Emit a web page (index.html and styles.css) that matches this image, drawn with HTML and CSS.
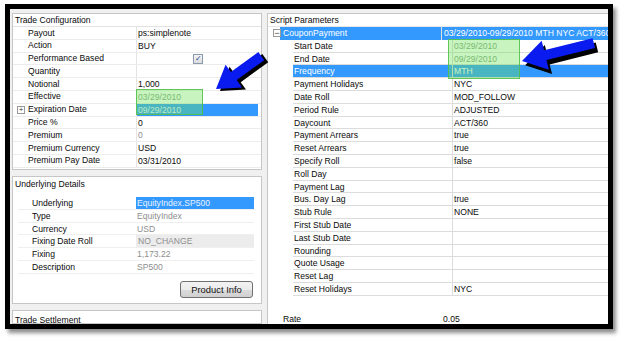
FILE: index.html
```html
<!DOCTYPE html>
<html>
<head>
<meta charset="utf-8">
<link rel="stylesheet" href="styles.css">
</head>
<body>
<div class="frame">
  <div class="left-col">
    <section class="box trade-config">
      <div class="box-header lined">Trade Configuration</div>
      <div class="prop-list">
        <div class="prop"><div class="lbl">Payout</div><div class="val">ps:simplenote</div></div>
        <div class="prop"><div class="lbl">Action</div><div class="val">BUY</div></div>
        <div class="prop"><div class="lbl">Performance Based</div><div class="val"><span class="check">&#10003;</span></div></div>
        <div class="prop"><div class="lbl">Quantity</div><div class="val"></div></div>
        <div class="prop"><div class="lbl">Notional</div><div class="val">1,000</div></div>
        <div class="prop"><div class="lbl">Effective</div><div class="val muted-green">03/29/2010</div></div>
        <div class="prop"><div class="lbl has-exp"><span class="exp">+</span>Expiration Date</div><div class="val selected">09/29/2010</div></div>
        <div class="prop"><div class="lbl">Price %</div><div class="val">0</div></div>
        <div class="prop"><div class="lbl">Premium</div><div class="val grey">0</div></div>
        <div class="prop"><div class="lbl">Premium Currency</div><div class="val">USD</div></div>
        <div class="prop"><div class="lbl">Premium Pay Date</div><div class="val">03/31/2010</div></div>
      </div>
    </section>

    <section class="box underlying">
      <div class="box-header">Underlying Details</div>
      <div class="u-list">
        <div class="urow"><div class="ulbl">Underlying</div><div class="uval selected">EquityIndex.SP500</div></div>
        <div class="urow"><div class="ulbl">Type</div><div class="uval grey">EquityIndex</div></div>
        <div class="urow"><div class="ulbl">Currency</div><div class="uval grey">USD</div></div>
        <div class="urow"><div class="ulbl">Fixing Date Roll</div><div class="uval grey shaded">NO_CHANGE</div></div>
        <div class="urow"><div class="ulbl">Fixing</div><div class="uval grey">1,173.22</div></div>
        <div class="urow"><div class="ulbl">Description</div><div class="uval grey">SP500</div></div>
      </div>
      <div class="btn-row"><button class="btn">Product Info</button></div>
    </section>

    <section class="box settlement">
      <div class="box-header">Trade Settlement</div>
    </section>
  </div>

  <section class="box script">
    <div class="box-header">Script Parameters</div>
    <div class="top-row selected">
      <span class="exp minus">&minus;</span>
      <div class="top-lbl">CouponPayment</div>
      <div class="top-val">03/29/2010-09/29/2010 MTH NYC ACT/360</div>
    </div>
    <div class="child-list">
      <div class="crow"><div class="clbl">Start Date</div><div class="cval muted-green">03/29/2010</div></div>
      <div class="crow"><div class="clbl">End Date</div><div class="cval muted-green">09/29/2010</div></div>
      <div class="crow selected"><div class="clbl">Frequency</div><div class="cval">MTH</div></div>
      <div class="crow"><div class="clbl">Payment Holidays</div><div class="cval">NYC</div></div>
      <div class="crow"><div class="clbl">Date Roll</div><div class="cval">MOD_FOLLOW</div></div>
      <div class="crow"><div class="clbl">Period Rule</div><div class="cval">ADJUSTED</div></div>
      <div class="crow"><div class="clbl">Daycount</div><div class="cval">ACT/360</div></div>
      <div class="crow"><div class="clbl">Payment Arrears</div><div class="cval">true</div></div>
      <div class="crow"><div class="clbl">Reset Arrears</div><div class="cval">true</div></div>
      <div class="crow"><div class="clbl">Specify Roll</div><div class="cval">false</div></div>
      <div class="crow"><div class="clbl">Roll Day</div><div class="cval"></div></div>
      <div class="crow"><div class="clbl">Payment Lag</div><div class="cval"></div></div>
      <div class="crow"><div class="clbl">Bus. Day Lag</div><div class="cval">true</div></div>
      <div class="crow"><div class="clbl">Stub Rule</div><div class="cval">NONE</div></div>
      <div class="crow"><div class="clbl">First Stub Date</div><div class="cval"></div></div>
      <div class="crow"><div class="clbl">Last Stub Date</div><div class="cval"></div></div>
      <div class="crow"><div class="clbl">Rounding</div><div class="cval"></div></div>
      <div class="crow"><div class="clbl">Quote Usage</div><div class="cval"></div></div>
      <div class="crow"><div class="clbl">Reset Lag</div><div class="cval"></div></div>
      <div class="crow"><div class="clbl">Reset Holidays</div><div class="cval">NYC</div></div>
    </div>
    <div class="top-row plain">
      <div class="top-lbl">Rate</div>
      <div class="top-val">0.05</div>
    </div>
  </section>
</div>

<div class="hl hl-left"></div>
<div class="hl hl-right"></div>

<svg class="arrows" width="621" height="339" viewBox="0 0 621 339">
  <g transform="translate(216 89) rotate(-36)">
    <polygon class="shadow" transform="translate(2 4)" points="0,0 22,-14 22,-5 56,-5 56,5 22,5 22,14"/>
    <polygon class="blue" points="0,0 22,-14 22,-5 56,-5 56,5 22,5 22,14"/>
  </g>
  <g transform="translate(522 61) rotate(-14)">
    <polygon class="shadow" transform="translate(2 5)" points="0,0 24,-15 24,-5 74,-5 74,5 24,5 24,15"/>
    <polygon class="blue" points="0,0 24,-15 24,-5 74,-5 74,5 24,5 24,15"/>
  </g>
</svg>
</body>
</html>
```

FILE: styles.css
```css
* { box-sizing: border-box; }
html, body { margin: 0; padding: 0; background: #fff; }
body {
  position: relative;
  width: 621px;
  height: 339px;
  overflow: hidden;
  font-family: "Liberation Sans", Arial, sans-serif;
  font-size: 8.6px;
  color: #0a0a0a;
}

.frame {
  position: absolute;
  left: 5px;
  top: 4px;
  width: 608px;
  height: 325px;
  border: 5px solid #000;
  background: #f0f0f0;
  box-shadow: 3px 4px 4px rgba(0,0,0,0.45);
  display: flex;
  gap: 5px;
  padding: 4px 0 0 2px;
  overflow: hidden;
}

.left-col {
  width: 250px;
  display: flex;
  flex-direction: column;
  gap: 6px;
  flex: none;
}

.box {
  background: #fff;
  border: 1px solid #c6c6c6;
}

.box-header {
  height: 13px;
  line-height: 13px;
  padding-left: 2px;
  white-space: nowrap;
}
.box-header.lined { border-bottom: 1px solid #e2e2e2; height: 13px; line-height: 12px; }

.trade-config { height: 157px; flex: none; }

.prop {
  display: flex;
  height: 12.8px;
  line-height: 12.8px;
  border-bottom: 1px solid #ececec;
}
.prop .lbl {
  width: 123px;
  padding-left: 15px;
  display: flex;
  align-items: center;
  white-space: nowrap;
}
.prop .lbl.has-exp { padding-left: 4px; }
.exp {
  width: 8px;
  height: 8px;
  border: 1px solid #9a9a9a;
  font-size: 8px;
  line-height: 6px;
  text-align: center;
  color: #444;
  margin-right: 3px;
  flex: none;
  background: #fff;
}
.prop .val {
  flex: 1;
  border-left: 1px solid #e4e4e4;
  padding-left: 1px;
  margin-right: 3px;
  white-space: nowrap;
  position: relative;
}
.selected { background: #3399ff; color: #fff; }
.prop .val.selected, .uval.selected { color: #e8f2ff; }
.grey { color: #8e8e8e; }
.muted-green { color: #7f9f7f; }

.check {
  position: absolute;
  left: 56px;
  top: 1px;
  width: 10px;
  height: 10px;
  border: 1px solid #8a9bb0;
  background: linear-gradient(#f4f4f4, #dcdcdc);
  color: #2a4a9a;
  font-size: 8px;
  line-height: 8px;
  text-align: center;
}

.underlying {
  height: 128px;
  flex: none;
  display: flex;
  flex-direction: column;
}
.underlying .box-header { height: 14px; line-height: 14px; }
.u-list {
  margin: 6px 7px 0 5px;
}
.urow {
  display: flex;
  height: 12.8px;
  line-height: 12.8px;
  border-bottom: 1px solid #efefef;
}
.ulbl {
  width: 118px;
  padding-left: 14px;
  white-space: nowrap;
}
.uval {
  flex: 1;
  padding-left: 1px;
  white-space: nowrap;
}
.uval.shaded { background: #ececec; padding-left: 2px; }

.btn-row {
  display: flex;
  justify-content: flex-end;
  padding: 7px 8px 0 0;
}
.btn {
  width: 73px;
  height: 17px;
  padding: 0;
  border: 1px solid #707070;
  border-radius: 3px;
  background: linear-gradient(#f3f3f3 0%, #ebebeb 50%, #dcdcdc 51%, #d0d0d0 100%);
  font-family: "Liberation Sans", Arial, sans-serif;
  font-size: 9.4px;
  color: #111;
}

.settlement { flex: 1 1 0; min-height: 0; }
.settlement .box-header { height: 18px; line-height: 18px; }

.script {
  flex: 1;
  border-right: none;
  border-bottom: none;
  min-width: 0;
}
.script .box-header { border-bottom: 1px solid #e6e6e6; }

.top-row {
  display: flex;
  align-items: center;
  height: 12.8px;
  line-height: 12.8px;
  white-space: nowrap;
  position: relative;
}
.top-row.selected { margin-left: 12px; }
.top-row .exp.minus {
  position: absolute;
  left: -7px;
  top: 2px;
  color: #444;
  font-size: 9px;
  line-height: 6px;
}
.top-lbl {
  width: 161px;
  padding-left: 3px;
  flex: none;
}
.top-row.plain .top-lbl { width: 173px; padding-left: 15px; }
.top-row.plain { margin-top: 17px; }
.top-val {
  flex: 1;
  padding-left: 2px;
  border-left: 1px solid #e0e0e0;
  overflow: hidden;
}
.top-row.plain .top-val { border-left: none; }

.child-list { margin-left: 25px; }
.crow {
  display: flex;
  height: 12.8px;
  line-height: 12.8px;
  border-bottom: 1px solid #dcdcdc;
  white-space: nowrap;
}
.clbl { width: 159px; padding-left: 1px; flex: none; }
.cval {
  flex: 1;
  border-left: 1px solid #dcdcdc;
  padding-left: 1px;
}

.hl {
  position: absolute;
  background: rgba(110, 225, 90, 0.38);
  border: 1.5px solid rgba(80, 190, 70, 0.85);
}
.hl-left { left: 136px; top: 89px; width: 67px; height: 26px; }
.hl-right { left: 448px; top: 39px; width: 72px; height: 40px; }

.arrows {
  position: absolute;
  left: 0;
  top: 0;
  pointer-events: none;
}
.arrows .shadow { fill: #000; }
.arrows .blue { fill: #0a1bf0; }
```
